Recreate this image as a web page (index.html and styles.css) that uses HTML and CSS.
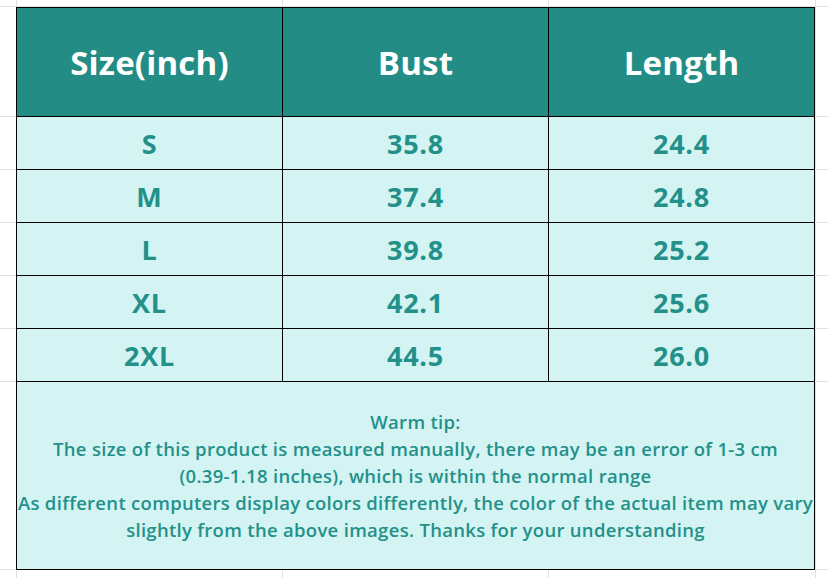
FILE: index.html
```html
<!DOCTYPE html>
<html lang="en">
<head>
<meta charset="utf-8">
<title>Size chart</title>
<link rel="stylesheet" href="styles.css">
</head>
<body>
<div class="sheet">
  <div class="chart">
    <div class="cell head">Size(inch)</div>
    <div class="cell head">Bust</div>
    <div class="cell head">Length</div>

    <div class="cell">S</div>
    <div class="cell">35.8</div>
    <div class="cell">24.4</div>

    <div class="cell">M</div>
    <div class="cell">37.4</div>
    <div class="cell">24.8</div>

    <div class="cell">L</div>
    <div class="cell">39.8</div>
    <div class="cell">25.2</div>

    <div class="cell">XL</div>
    <div class="cell">42.1</div>
    <div class="cell">25.6</div>

    <div class="cell">2XL</div>
    <div class="cell">44.5</div>
    <div class="cell">26.0</div>

    <div class="cell notes">
      <p>Warm tip:</p>
      <p>The size of this product is measured manually, there may be an error of 1-3 cm<br>(0.39-1.18 inches), which is within the normal range</p>
      <p>As different computers display colors differently, the color of the actual item may vary<br>slightly from the above images. Thanks for your understanding</p>
    </div>
  </div>
</div>
</body>
</html>
```

FILE: styles.css
```css
html, body {
  margin: 0;
  padding: 0;
}
body {
  width: 828px;
  height: 578px;
  overflow: hidden;
  background-color: #ffffff;
  background-image:
    linear-gradient(#e1e1e1, #e1e1e1),
    linear-gradient(#e1e1e1, #e1e1e1),
    linear-gradient(#e1e1e1, #e1e1e1),
    linear-gradient(#e1e1e1, #e1e1e1),
    linear-gradient(#e1e1e1, #e1e1e1),
    linear-gradient(#e1e1e1, #e1e1e1),
    linear-gradient(#e1e1e1, #e1e1e1),
    linear-gradient(#e1e1e1, #e1e1e1),
    linear-gradient(#e1e1e1, #e1e1e1),
    linear-gradient(#e1e1e1, #e1e1e1),
    linear-gradient(#e1e1e1, #e1e1e1),
    linear-gradient(#e1e1e1, #e1e1e1);
  background-repeat: no-repeat;
  background-size:
    100% 1px, 100% 1px, 100% 1px, 100% 1px, 100% 1px, 100% 1px, 100% 1px, 100% 1px,
    1px 100%, 1px 100%, 1px 100%, 1px 100%;
  background-position:
    0 6px, 0 116px, 0 169px, 0 222px, 0 275px, 0 328px, 0 381px, 0 569px,
    16px 0, 282px 0, 548px 0, 815px 0;
  font-family: "Open Sans", "Noto Sans", "Noto Sans CJK KR", sans-serif;
}
.sheet {
  padding: 7px 0 0 16px;
}
.chart {
  display: grid;
  grid-template-columns: 266px 266px 266px;
  grid-template-rows: 109px repeat(5, 53px) 188px;
  width: 798px;
  border-left: 1px solid #000;
  border-top: 1px solid #000;
}
.cell {
  display: flex;
  align-items: center;
  justify-content: center;
  border-right: 1px solid #000;
  border-bottom: 1px solid #000;
  background: #d3f4f2;
  color: #23908a;
  font-weight: 700;
  font-size: 27px;
  letter-spacing: 0.8px;
}
.head {
  background: #238c84;
  color: #ffffff;
  font-size: 33px;
  letter-spacing: 0.2px;
}
.notes {
  grid-column: 1 / 4;
  flex-direction: column;
  font-size: 18.5px;
  font-weight: 600;
  line-height: 27px;
  letter-spacing: 0.3px;
  text-align: center;
}
.notes p {
  margin: 0;
}
```
